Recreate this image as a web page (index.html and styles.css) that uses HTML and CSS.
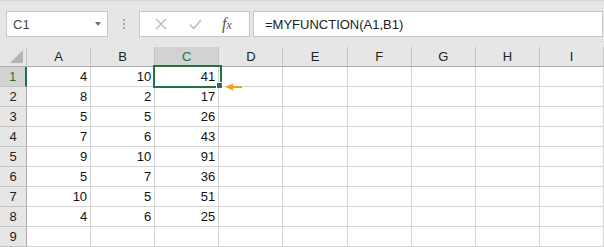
FILE: index.html
```html
<!DOCTYPE html>
<html lang="en">
<head>
    <meta charset="UTF-8">
    <title>MYFUNCTION</title>
    <link rel="stylesheet" href="styles.css">
</head>
<body>
    <div class="toolbar">
        <div class="name-box">
            <span>C1</span>
            <span class="caret"></span>
        </div>
        <div class="grip"><i></i><i></i><i></i></div>
        <div class="fx-buttons">
            <svg class="fx-icon" width="12" height="12" viewBox="0 0 12 12">
                <path d="M1 1 L11 11 M11 1 L1 11" stroke="#c2c2c2" stroke-width="1.6" fill="none"/>
            </svg>
            <svg class="fx-icon" width="13" height="11" viewBox="0 0 13 11">
                <path d="M1 5.5 L4.8 9.5 L12 1" stroke="#c2c2c2" stroke-width="1.8" fill="none"/>
            </svg>
            <span class="fx-label">f<small>x</small></span>
        </div>
        <div class="formula">=MYFUNCTION(A1,B1)</div>
    </div>

    <div class="sheet">
        <div class="grid">
            <div class="hd corner"></div>
            <div class="hd">A</div><div class="hd">B</div><div class="hd active">C</div><div class="hd">D</div><div class="hd">E</div><div class="hd">F</div><div class="hd">G</div><div class="hd">H</div><div class="hd">I</div>

            <div class="rh active">1</div><div class="c">4</div><div class="c">10</div><div class="c">41</div><div class="c"></div><div class="c"></div><div class="c"></div><div class="c"></div><div class="c"></div><div class="c"></div>
            <div class="rh">2</div><div class="c">8</div><div class="c">2</div><div class="c">17</div><div class="c"></div><div class="c"></div><div class="c"></div><div class="c"></div><div class="c"></div><div class="c"></div>
            <div class="rh">3</div><div class="c">5</div><div class="c">5</div><div class="c">26</div><div class="c"></div><div class="c"></div><div class="c"></div><div class="c"></div><div class="c"></div><div class="c"></div>
            <div class="rh">4</div><div class="c">7</div><div class="c">6</div><div class="c">43</div><div class="c"></div><div class="c"></div><div class="c"></div><div class="c"></div><div class="c"></div><div class="c"></div>
            <div class="rh">5</div><div class="c">9</div><div class="c">10</div><div class="c">91</div><div class="c"></div><div class="c"></div><div class="c"></div><div class="c"></div><div class="c"></div><div class="c"></div>
            <div class="rh">6</div><div class="c">5</div><div class="c">7</div><div class="c">36</div><div class="c"></div><div class="c"></div><div class="c"></div><div class="c"></div><div class="c"></div><div class="c"></div>
            <div class="rh">7</div><div class="c">10</div><div class="c">5</div><div class="c">51</div><div class="c"></div><div class="c"></div><div class="c"></div><div class="c"></div><div class="c"></div><div class="c"></div>
            <div class="rh">8</div><div class="c">4</div><div class="c">6</div><div class="c">25</div><div class="c"></div><div class="c"></div><div class="c"></div><div class="c"></div><div class="c"></div><div class="c"></div>
            <div class="rh">9</div><div class="c"></div><div class="c"></div><div class="c"></div><div class="c"></div><div class="c"></div><div class="c"></div><div class="c"></div><div class="c"></div><div class="c"></div>
        </div>

        <!-- active cell C1 -->
        <div class="selection"></div>
        <div class="fill-handle"></div>
        <svg class="pointer" width="20" height="10" viewBox="0 0 20 10">
            <path d="M7 5 L18 5" stroke="#f7a01c" stroke-width="2"/>
            <path d="M1 5 L9 1.5 L9 8.5 Z" fill="#f7a01c"/>
        </svg>
    </div>
</body>
</html>
```

FILE: styles.css
```css
* {
    box-sizing: border-box;
}
body {
    margin: 0;
    width: 604px;
    font-family: "Liberation Sans", Arial, sans-serif;
    font-size: 13px;
    background: #fff;
    overflow: hidden;
}

/* formula bar */
.toolbar {
    height: 47px;
    display: flex;
    align-items: flex-start;
    padding: 11px 1px 0 6px;
    background: #e6e6e6;
    border-top: 1px solid #d6d6d6;
    padding-top: 10px;
}
.name-box,
.fx-buttons,
.formula {
    height: 26px;
    background: #fff;
    border: 1px solid #c6c6c6;
    display: flex;
    align-items: center;
}
.name-box {
    width: 102px;
    padding: 0 6px;
    justify-content: space-between;
    color: #444;
}
.caret {
    width: 0;
    height: 0;
    border-left: 3.5px solid transparent;
    border-right: 3.5px solid transparent;
    border-top: 4px solid #707070;
    margin-right: 0;
}
.grip {
    width: 31px;
    height: 26px;
    display: flex;
    flex-direction: column;
    align-items: center;
    justify-content: center;
    gap: 2px;
}
.grip i {
    width: 2px;
    height: 2px;
    background: #a8a8a8;
}
.fx-buttons {
    width: 111px;
    padding-left: 15px;
    gap: 22px;
}
.fx-label {
    font-family: "Liberation Serif", "Times New Roman", serif;
    font-style: italic;
    font-size: 16px;
    color: #555;
    margin-left: -2px;
}
.fx-label small {
    font-size: 12px;
}
.formula {
    flex: 1;
    margin-left: 3px;
    padding-left: 11px;
    color: #222;
}

/* grid */
.sheet {
    position: relative;
}
.grid {
    display: grid;
    grid-template-columns: 27px repeat(9, 1fr);
    grid-auto-rows: 20px;
    line-height: 19px;
}
.hd {
    background: #e6e6e6;
    text-align: center;
    color: #222;
    border-bottom: 1px solid #ababab;
    border-right: 1px solid #c4c4c4;
}
.hd.corner {
    position: relative;
    border-right-color: #c4c4c4;
}
.hd.corner::after {
    content: "";
    position: absolute;
    right: 3px;
    bottom: 3px;
    width: 13px;
    height: 13px;
    background: #b4b4b4;
    clip-path: polygon(100% 0, 100% 100%, 0 100%);
}
.rh {
    background: #e6e6e6;
    text-align: center;
    color: #222;
    border-bottom: 1px solid #c4c4c4;
    border-right: 1px solid #ababab;
}
.hd.active {
    background: #d2d2d2;
    color: #217346;
}
.rh.active {
    background: #d2d2d2;
    color: #217346;
    border-right: 2px solid #217346;
}
.c {
    text-align: right;
    padding-right: 3px;
    color: #111;
    border-bottom: 1px solid #d4d4d4;
    border-right: 1px solid #d4d4d4;
}

.selection {
    position: absolute;
    left: 153px;
    top: 18px;
    width: 69px;
    height: 23px;
    border: 2px solid #217346;
}
.fill-handle {
    position: absolute;
    left: 216px;
    top: 35px;
    width: 7px;
    height: 7px;
    background: #217346;
    border: 1px solid #fff;
}
.pointer {
    position: absolute;
    left: 224px;
    top: 35px;
}
```
